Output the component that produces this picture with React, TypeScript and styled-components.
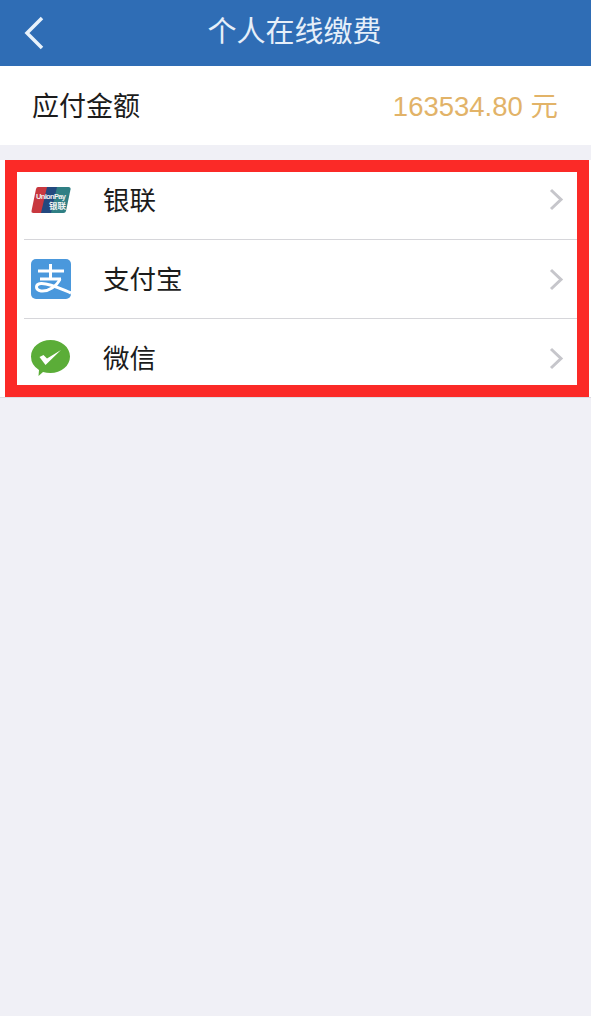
import { FC, ReactNode } from "react";
import styled, { createGlobalStyle } from "styled-components";

const GlobalStyle = createGlobalStyle`
  html, body {
    margin: 0;
    padding: 0;
    background: #f0f0f6;
  }
  body {
    font-family: "Liberation Sans", "Noto Sans CJK SC", sans-serif;
  }
`;

const UnionPayIcon: FC = () => (
  <svg width="40" height="26" viewBox="0 0 40 26">
    <path d="M7 0h12l-6 26H2.500Q0 26 .6 23.500L5 2Q5.500 0 7 0z" fill="#c8383f" />
    <path d="M16 0h13l-6 26H10z" fill="#23497f" />
    <path d="M26 0h11.500Q40 0 39.500 2.500L35 24q-.5 2-2.500 2H20z" fill="#2f7f84" />
    <LogoText x="5" y="12" fontSize="7.500" fontWeight="700" textLength="30">
      UnionPay
    </LogoText>
    <LogoText x="18" y="22" fontSize="8.500" fontWeight="700">
      银联
    </LogoText>
  </svg>
);

const AlipayIcon: FC = () => (
  <svg width="40" height="40" viewBox="0 0 40 40">
    <rect width="40" height="40" rx="5" fill="#4a98dc" />
    <g fill="none" stroke="#fff" strokeWidth="3">
      <path d="M7 12h26M19.500 5v14M9 20h21" />
      <path d="M29 20C26 27 17 33 10 32C4 31 4 25 10 24.500C18 24 28 29 40 34" />
    </g>
  </svg>
);

const WechatIcon: FC = () => (
  <svg width="39" height="36" viewBox="0 0 39 36">
    <path
      d="M19.500 0C30 0 39 7 39 16.500S30 33 19.500 33q-4 0-7.500-1l-4.500 4 .5-6Q0 25 0 16.500C0 7 9 0 19.500 0z"
      fill="#5bad38"
    />
    <path d="M8.500 17l4-2 3.500 3.500L30 10 14.500 25z" fill="#fff" />
  </svg>
);

const Chevron: FC = () => (
  <ChevronSvg width="15" height="23" viewBox="0 0 15 23">
    <path d="M2 2l10 9.500L2 21" fill="none" stroke="#c6c6cb" strokeWidth="3" />
  </ChevronSvg>
);

const payments: { name: string; icon: ReactNode }[] = [
  { name: "银联", icon: <UnionPayIcon /> },
  { name: "支付宝", icon: <AlipayIcon /> },
  { name: "微信", icon: <WechatIcon /> },
];

const App: FC = () => {
  return (
    <Page>
      <GlobalStyle />
      <NavBar>
        <BackIcon width="22" height="36" viewBox="0 0 22 36">
          <path d="M19 3L4 18l15 15" fill="none" stroke="#e8f2fb" strokeWidth="3.500" />
        </BackIcon>
        <Title>个人在线缴费</Title>
      </NavBar>
      <AmountRow>
        <AmountLabel>应付金额</AmountLabel>
        <AmountValue>163534.80 元</AmountValue>
      </AmountRow>
      <PaymentList>
        {payments.map(({ name, icon }, i) => (
          <PaymentRow key={name} $first={i === 0}>
            <IconSlot>{icon}</IconSlot>
            <PaymentName>{name}</PaymentName>
            <Chevron />
          </PaymentRow>
        ))}
        <Highlight />
      </PaymentList>
    </Page>
  );
};

export default App;

const Page = styled.div`
  width: 591px;
  height: 1016px;
  overflow: hidden;
  background: #f0f0f6;
`;
const NavBar = styled.header`
  position: relative;
  height: 66px;
  display: flex;
  align-items: center;
  justify-content: center;
  background: #2f6db5;
`;
const BackIcon = styled.svg`
  position: absolute;
  left: 23px;
  top: 15px;
`;
const Title = styled.h1`
  margin: 0 2px 2px 0;
  font-size: 29px;
  font-weight: 400;
  line-height: 1;
  color: #e6eff9;
`;
const AmountRow = styled.section`
  height: 79px;
  margin-bottom: 15px;
  padding: 0 33px 0 32px;
  display: flex;
  align-items: center;
  justify-content: space-between;
  background: #fff;
`;
const AmountLabel = styled.span`
  margin-bottom: 2px;
  font-size: 27px;
  color: #1c1c1c;
`;
const AmountValue = styled.span`
  margin-bottom: 3px;
  font-size: 27.500px;
  color: #e2b368;
`;
const PaymentList = styled.section`
  position: relative;
  background: #fff;
  border-bottom: 1px solid #dcdce2;
`;
const PaymentRow = styled.div<{ $first: boolean }>`
  height: 79px;
  box-sizing: border-box;
  margin: 0 14px 0 24px;
  padding-right: 13px;
  display: flex;
  align-items: center;
  border-top: ${(p) => (p.$first ? "none" : "1px solid #d6d6da")};
`;
const IconSlot = styled.div`
  width: 72px;
  margin-left: 7px;
  display: flex;
  align-items: center;
`;
const PaymentName = styled.span`
  flex: 1;
  padding-bottom: 3px;
  font-size: 26.500px;
  color: #1c1c1c;
`;
const ChevronSvg = styled.svg`
  display: block;
`;
const LogoText = styled.text`
  fill: #f2f2f2;
  font-family: "Liberation Sans", "Noto Sans CJK SC", sans-serif;
`;
const Highlight = styled.div`
  position: absolute;
  left: 5px;
  right: 2px;
  top: 0;
  bottom: 0;
  border: 12px solid #fb2a27;
  pointer-events: none;
`;
